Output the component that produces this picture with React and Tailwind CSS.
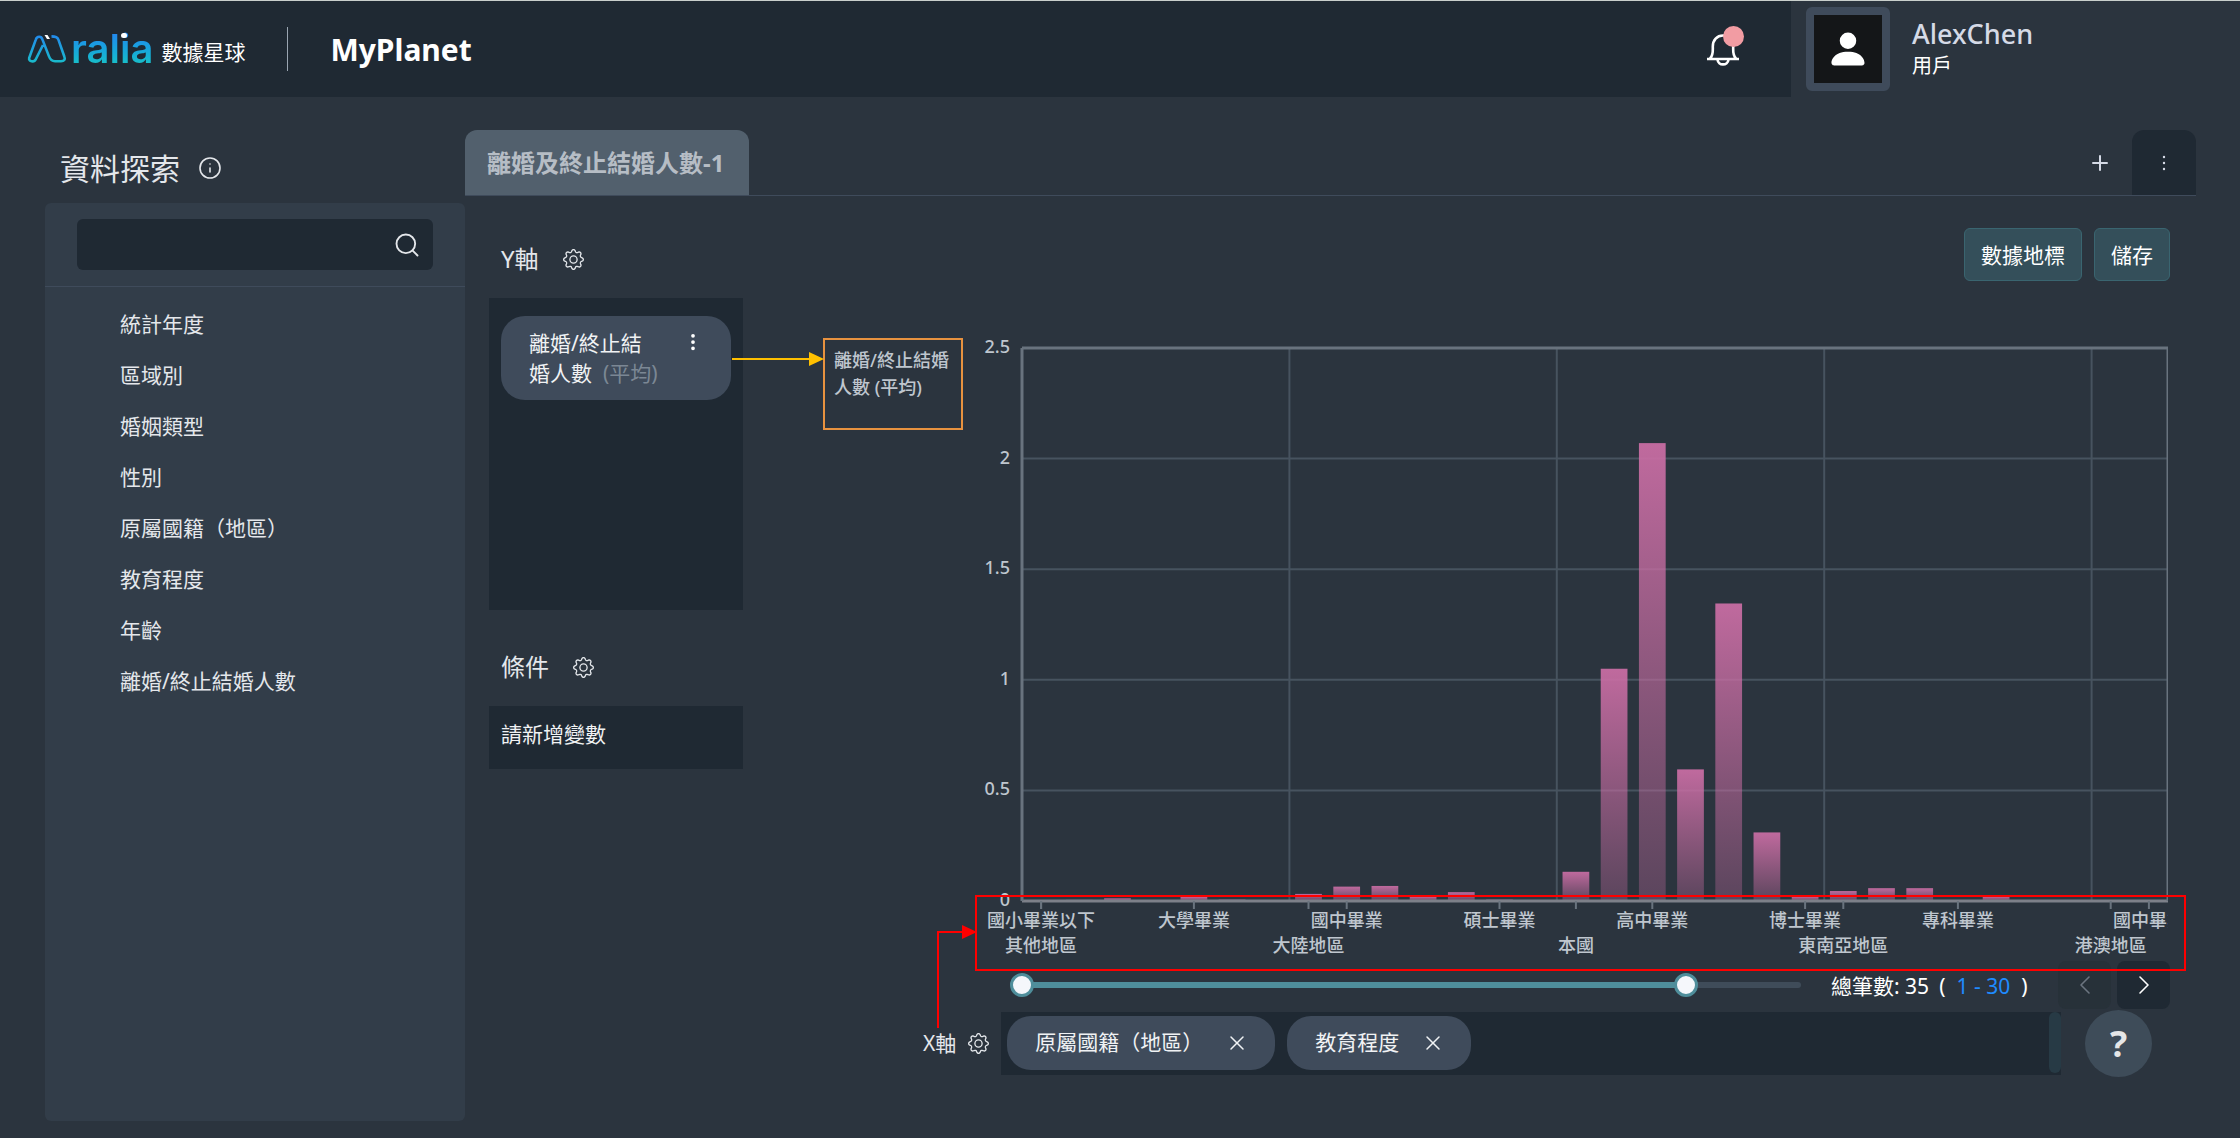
import { useState } from "react";
import { ChevronLeft, ChevronRight, Info, Plus, Search, X } from "lucide-react";
import { AiOutlineMore } from "react-icons/ai";
import { BsGear, BsPersonFill, BsThreeDotsVertical } from "react-icons/bs";

const fields = [
  "統計年度",
  "區域別",
  "婚姻類型",
  "性別",
  "原屬國籍（地區）",
  "教育程度",
  "年齡",
  "離婚/終止結婚人數",
];

const values = [
  0, 0.005, 0.012, 0.004, 0.018, 0.006, 0.003, 0.032, 0.065, 0.068, 0.02, 0.04,
  0.006, 0.002, 0.132, 1.05, 2.07, 0.595, 1.345, 0.31, 0.02, 0.045, 0.058,
  0.058, 0.004, 0.02, 0, 0, 0, 0.004,
];

const levelLabels = [
  { slot: 0, text: "國小畢業以下" },
  { slot: 4, text: "大學畢業" },
  { slot: 8, text: "國中畢業" },
  { slot: 12, text: "碩士畢業" },
  { slot: 16, text: "高中畢業" },
  { slot: 20, text: "博士畢業" },
  { slot: 24, text: "專科畢業" },
  { slot: 29, text: "國中畢業" },
];

const regionLabels = [
  { slot: 0, text: "其他地區" },
  { slot: 7, text: "大陸地區" },
  { slot: 14, text: "本國" },
  { slot: 21, text: "東南亞地區" },
  { slot: 28, text: "港澳地區" },
];

const yTicks = [0, 0.5, 1, 1.5, 2, 2.5];
const yMax = 2.5;
const plotHeight = 553;
const xAt = (slot) => `${(slot / values.length) * 100}%`;
const yAt = (value) => plotHeight - (value / yMax) * plotHeight;

const Logo = () => (
  <a href="#home" className="flex items-center">
    <svg width="40" height="30" viewBox="0 0 40 30" fill="none">
      <defs>
        <linearGradient id="logo" x1="0" y1="0" x2="0" y2="30" gradientUnits="userSpaceOnUse">
          <stop offset="0" stopColor="#2388ee" />
          <stop offset="1" stopColor="#19bdc9" />
        </linearGradient>
      </defs>
      <path
        d="M16 11 L8.8 25.2 C7.4 28.4 1.2 28 2.2 23.8 L8.8 5.6 C10 2 14.2 1.8 15.4 5.4 L22 22.4 C23.2 25.6 25 27.2 28 27.2 L34 27.2 C37.2 27.2 38.4 25.4 37.4 22.8 L31.4 5.6 C30.4 3 28.6 2.4 24.5 2.4"
        stroke="url(#logo)"
        strokeWidth="2.6"
      />
      <path d="M17.5 1 H20.5 L23 5 H20 Z" fill="#fff" />
    </svg>
    <span className="relative ml-1 font-[Inter,sans-serif] text-[40px] leading-10 font-semibold">
      <span className="bg-linear-to-b from-[#2388ee] from-20% to-[#19bdc9] to-80% bg-clip-text text-transparent">
        ralia
      </span>
      {/* white dot of the i */}
      <span className="absolute top-1 right-[26px] h-[5px] w-1.5 rounded-sm bg-white"></span>
    </span>
    <span className="mt-2 ml-2 text-[21px] text-white">數據星球</span>
  </a>
);

const Header = () => (
  <header className="flex h-[97px] border-t border-[#c9cfcc]">
    <div className="flex flex-1 items-center bg-[#1f2933] pr-[49px] pl-[27px]">
      <Logo />
      <div className="ml-[42px] h-11 w-px bg-[#9aa5b1]"></div>
      <h1 className="ml-[42px] text-[30px] font-bold text-white">MyPlanet</h1>
      <button type="button" aria-label="通知" className="relative ml-auto">
        <svg width="38" height="38" viewBox="0 0 38 38" fill="none" stroke="#fff" strokeWidth="2.6">
          <path d="M3 29 H35 M6 28.5 C9.5 25 8.8 21 8.8 16.5 C8.8 10 13 5.5 19 5.5 C25 5.5 29.2 10 29.2 16.5 C29.2 21 28.5 25 32 28.5" />
          <path d="M13.5 29.5 C14 36 24 36 24.5 29.5" />
        </svg>
        <span className="absolute -top-1 -right-0.5 size-[21px] rounded-full bg-[#f29ca3]"></span>
      </button>
    </div>
    <div className="flex w-[449px] items-center pl-[15px]">
      <div className="flex size-[84px] items-center justify-center rounded-md border-8 border-[#3f4b5b] bg-[#141618]">
        <BsPersonFill className="size-11 text-white" />
      </div>
      <div className="ml-[22px] pt-0.5">
        <p className="text-[27px] leading-8 font-medium text-[#d5dae6]">AlexChen</p>
        <p className="text-[20px] leading-8 text-white">用戶</p>
      </div>
    </div>
  </header>
);

const Sidebar = () => (
  <aside className="flex w-[420px] shrink-0 flex-col pt-9">
    <div className="flex h-[70px] items-center pl-[15px]">
      <h2 className="text-[30px] text-[#e4e7eb]">資料探索</h2>
      <Info className="ml-[18px] size-6 text-[#e4e7eb]" strokeWidth={1.6} />
    </div>
    <div className="mb-[17px] flex-1 rounded-md bg-[#323d49]">
      <div className="border-b border-[#3f4b5b] px-8 py-4">
        <label className="flex h-[51px] items-center rounded-md bg-[#1f2933] pr-3">
          <input
            type="text"
            aria-label="搜尋欄位"
            className="min-w-0 flex-1 bg-transparent px-4 text-[21px] text-white outline-none"
          />
          <Search className="size-7 text-[#e4e7eb]" strokeWidth={1.6} />
        </label>
      </div>
      <ul className="pt-3 pl-[75px]">
        {fields.map((field) => (
          <li key={field} className="h-[51px] text-[21px] leading-[50px] text-[#e4e7eb]">
            {field}
          </li>
        ))}
      </ul>
    </div>
  </aside>
);

const Tabs = () => (
  <div className="flex h-[66px] border-b border-[#3f4b5b]">
    <button
      type="button"
      className="rounded-t-xl bg-[#52606d] pr-[25px] pl-[22px] text-[24px] font-bold text-[#b6bdc5]"
    >
      離婚及終止結婚人數-1
    </button>
    <button
      type="button"
      aria-label="新增分頁"
      className="ml-auto flex w-[65px] items-center justify-center text-[#d5dae6]"
    >
      <Plus className="size-6" />
    </button>
    <button
      type="button"
      aria-label="更多"
      className="flex w-16 items-center justify-center rounded-t-xl bg-[#1f2933] text-[#d5dae6]"
    >
      <AiOutlineMore className="size-[22px]" />
    </button>
  </div>
);

const SectionTitle = ({ title }) => (
  <div className="flex h-[62px] items-center gap-6 pl-3">
    <h3 className="text-[24px] text-[#e4e7eb]">{title}</h3>
    <button type="button" aria-label={`${title}設定`} className="text-[#e4e7eb]">
      <BsGear className="size-[21px]" />
    </button>
  </div>
);

const VariablePanel = () => (
  <div className="w-[254px] shrink-0">
    <SectionTitle title="Y軸" />
    <div className="mt-2 h-[312px] bg-[#1f2933] px-3 pt-[18px]">
      <div className="relative flex h-[84px] items-start rounded-3xl bg-[#3f4b5b] py-3 pr-7 pl-7">
        <div className="text-[21px] leading-[30px] text-[#f0f2f4]">
          <p>離婚/終止結</p>
          <p className="flex gap-[11px]">
            婚人數 <span className="text-[#7b8794]">(平均)</span>
          </p>
        </div>
        <button type="button" aria-label="變數選單" className="mt-1 ml-auto text-white">
          <BsThreeDotsVertical className="size-5" />
        </button>
        {/* Arrow to the chart title */}
        <svg width="92" height="14" className="absolute top-9 left-[231px]">
          <path d="M0 7 H80" stroke="#ffc000" strokeWidth="2" />
          <path d="M77 0 L92 7 L77 14 Z" fill="#ffc000" />
        </svg>
      </div>
    </div>
    <div className="mt-[26px]">
      <SectionTitle title="條件" />
      <p className="mt-2 h-[63px] bg-[#1f2933] pl-3 text-[21px] leading-[56px] text-[#f0f2f4]">
        請新增變數
      </p>
    </div>
  </div>
);

const Chart = () => (
  <div className="relative mt-2.5 mr-0.5 h-[553px] flex-1">
    <svg
      width="100%"
      height={plotHeight}
      className="overflow-visible text-[18px] font-medium [clip-path:inset(-20px_0px_-70px_-60px)]"
    >
      <defs>
        <linearGradient id="bar" x1="0" y1="0" x2="0" y2="1">
          <stop offset="0" stopColor="#cb6ea5" stopOpacity="0.93" />
          <stop offset="1" stopColor="#cb6ea5" stopOpacity="0.3" />
        </linearGradient>
      </defs>

      {yTicks.map((tick) => (
        <g key={tick}>
          <line x1="0" x2="100%" y1={yAt(tick)} y2={yAt(tick)} stroke="#47535f" strokeWidth="2" />
          <text x="-12" y={yAt(tick) + 5} textAnchor="end" fill="#bfc6ce">
            {tick}
          </text>
        </g>
      ))}
      {[7, 14, 21, 28].map((slot) => (
        <line key={slot} x1={xAt(slot)} x2={xAt(slot)} y1="0" y2={plotHeight} stroke="#47535f" strokeWidth="2" />
      ))}

      {values.map((value, i) => (
        <rect
          key={i}
          x={xAt(i + 0.15)}
          y={yAt(value)}
          width={xAt(0.7)}
          height={plotHeight - yAt(value)}
          fill="url(#bar)"
        />
      ))}

      <line x1="0" x2="100%" y1="0" y2="0" stroke="#69737e" strokeWidth="3" />
      <line x1="0" x2="100%" y1={plotHeight} y2={plotHeight} stroke="#7d8089" strokeWidth="3" />
      <line x1="0" x2="0" y1="0" y2={plotHeight} stroke="#69737e" strokeWidth="3" />
      <line x1="100%" x2="100%" y1="0" y2={plotHeight} stroke="#69737e" strokeWidth="3" />

      {[...levelLabels, ...regionLabels].map(({ slot, text }) => (
        <line
          key={`${slot}${text}`}
          x1={xAt(slot + 0.5)}
          x2={xAt(slot + 0.5)}
          y1={plotHeight}
          y2={plotHeight + 8}
          stroke="#69737e"
          strokeWidth="2"
        />
      ))}
      {levelLabels.map(({ slot, text }) => (
        <text key={slot} x={xAt(slot + 0.5)} y={plotHeight + 26} textAnchor="middle" fill="#bfc6ce">
          {text}
        </text>
      ))}
      {regionLabels.map(({ slot, text }) => (
        <text key={slot} x={xAt(slot + 0.5)} y={plotHeight + 51} textAnchor="middle" fill="#bfc6ce">
          {text}
        </text>
      ))}
    </svg>

    {/* X axis highlight */}
    <div className="absolute top-[547px] -right-[18px] -left-[47px] h-[76px] border-2 border-[#ff0000]"></div>
    <svg width="40" height="104" className="absolute top-[577px] -left-[85px]">
      <path d="M1 103 V7 H26" fill="none" stroke="#ff0000" strokeWidth="2" />
      <path d="M25 0 L40 7 L25 14 Z" fill="#ff0000" />
    </svg>
  </div>
);

const thumbStyle =
  "pointer-events-none col-start-1 row-start-1 h-6 w-full appearance-none bg-transparent [&::-webkit-slider-thumb]:pointer-events-auto [&::-webkit-slider-thumb]:size-6 [&::-webkit-slider-thumb]:appearance-none [&::-webkit-slider-thumb]:rounded-full [&::-webkit-slider-thumb]:border-3 [&::-webkit-slider-thumb]:border-[#4f8e9b] [&::-webkit-slider-thumb]:bg-[#f5f7fb]";

const RangeBar = () => {
  const total = 35;
  const [from, setFrom] = useState(1);
  const [to, setTo] = useState(30);
  const percent = (n) => ((n - 1) / (total - 1)) * 100;

  return (
    <div className="flex h-12 items-center pl-[267px]">
      <div className="grid flex-1 items-center">
        <div className="col-start-1 row-start-1 mx-3 h-1.5 rounded-full bg-[#3f4c59]">
          <div
            className="h-1.5 bg-[#4f8e9b]"
            style={{ marginLeft: `${percent(from)}%`, width: `${percent(to) - percent(from)}%` }}
          ></div>
        </div>
        <input
          type="range"
          aria-label="起始筆數"
          min="1"
          max={total}
          value={from}
          onChange={(e) => setFrom(Math.min(Number(e.target.value), to))}
          className={thumbStyle}
        />
        <input
          type="range"
          aria-label="結束筆數"
          min="1"
          max={total}
          value={to}
          onChange={(e) => setTo(Math.max(Number(e.target.value), from))}
          className={thumbStyle}
        />
      </div>
      <p className="ml-[18px] flex w-[227px] pt-1 text-[21px] text-white">
        <span>總筆數: {total}</span>
        <span className="ml-2.5">(</span>
        <span className="ml-[11px] text-[#1f8bff]">
          {from} - {to}
        </span>
        <span className="ml-[11px]">)</span>
      </p>
      <button
        type="button"
        aria-label="上一頁"
        disabled
        className="flex h-12 w-[53px] items-center justify-center rounded-lg bg-[#273139] text-[#6b7580]"
      >
        <ChevronLeft className="size-8" strokeWidth={1.2} />
      </button>
      <button
        type="button"
        aria-label="下一頁"
        className="ml-1.5 flex h-12 w-[53px] items-center justify-center rounded-lg bg-[#1f2933] text-white"
      >
        <ChevronRight className="size-8" strokeWidth={1.2} />
      </button>
    </div>
  );
};

const XAxisBar = () => (
  <div className="mt-px flex h-[67px] items-center pr-[18px] pl-[180px]">
    <h3 className="text-[21px] text-[#e4e7eb]">X軸</h3>
    <button type="button" aria-label="X軸設定" className="ml-3 text-[#e4e7eb]">
      <BsGear className="size-[21px]" />
    </button>
    <div className="ml-3 flex h-[63px] flex-1 items-start bg-[#1f2933]">
      <div className="flex flex-1 gap-3 px-1.5 py-1">
        {["原屬國籍（地區）", "教育程度"].map((name) => (
          <div
            key={name}
            className="flex h-[54px] items-center gap-[22px] rounded-3xl bg-[#3f4b5b] pr-[26px] pl-7 text-[21px] text-[#f0f2f4]"
          >
            {name}
            <button type="button" aria-label={`移除${name}`}>
              <X className="size-6" strokeWidth={1.5} />
            </button>
          </div>
        ))}
      </div>
      <div className="h-[61px] w-3 rounded-full bg-[#273a45]"></div>
    </div>
    <button
      type="button"
      aria-label="說明"
      className="ml-6 size-[67px] rounded-full bg-[#3e4c59] text-[36px] font-bold text-[#e5e6e7]"
    >
      ?
    </button>
  </div>
);

const actionStyle =
  "h-[53px] rounded-md border border-[#3a6570] bg-[#344f5a] px-4 pt-0.5 text-[21px] text-white";

const App = () => {
  return (
    <div className="flex min-h-screen flex-col bg-[#2b343e] font-['Noto_Sans','Noto_Sans_CJK_TC',sans-serif]">
      <Header />
      <div className="flex flex-1 pr-11 pl-[45px]">
        <Sidebar />
        <main className="min-w-0 flex-1 pt-[33px]">
          <Tabs />
          <div className="flex pt-8 pr-[26px] pl-6">
            <VariablePanel />
            <div className="min-w-0 flex-1">
              <div className="flex justify-end gap-3">
                <button type="button" className={actionStyle}>
                  數據地標
                </button>
                <button type="button" className={actionStyle}>
                  儲存
                </button>
              </div>
              <div className="mt-[57px] mb-[60px] flex pl-20">
                <p className="mr-[59px] h-[92px] w-[140px] border-2 border-[#e8923f] px-[9px] py-[7px] text-[18px] leading-[27px] font-medium text-[#bfc6ce]">
                  離婚/終止結婚人數 (平均)
                </p>
                <Chart />
              </div>
              <RangeBar />
              <XAxisBar />
            </div>
          </div>
        </main>
      </div>
    </div>
  );
};

export default App;
